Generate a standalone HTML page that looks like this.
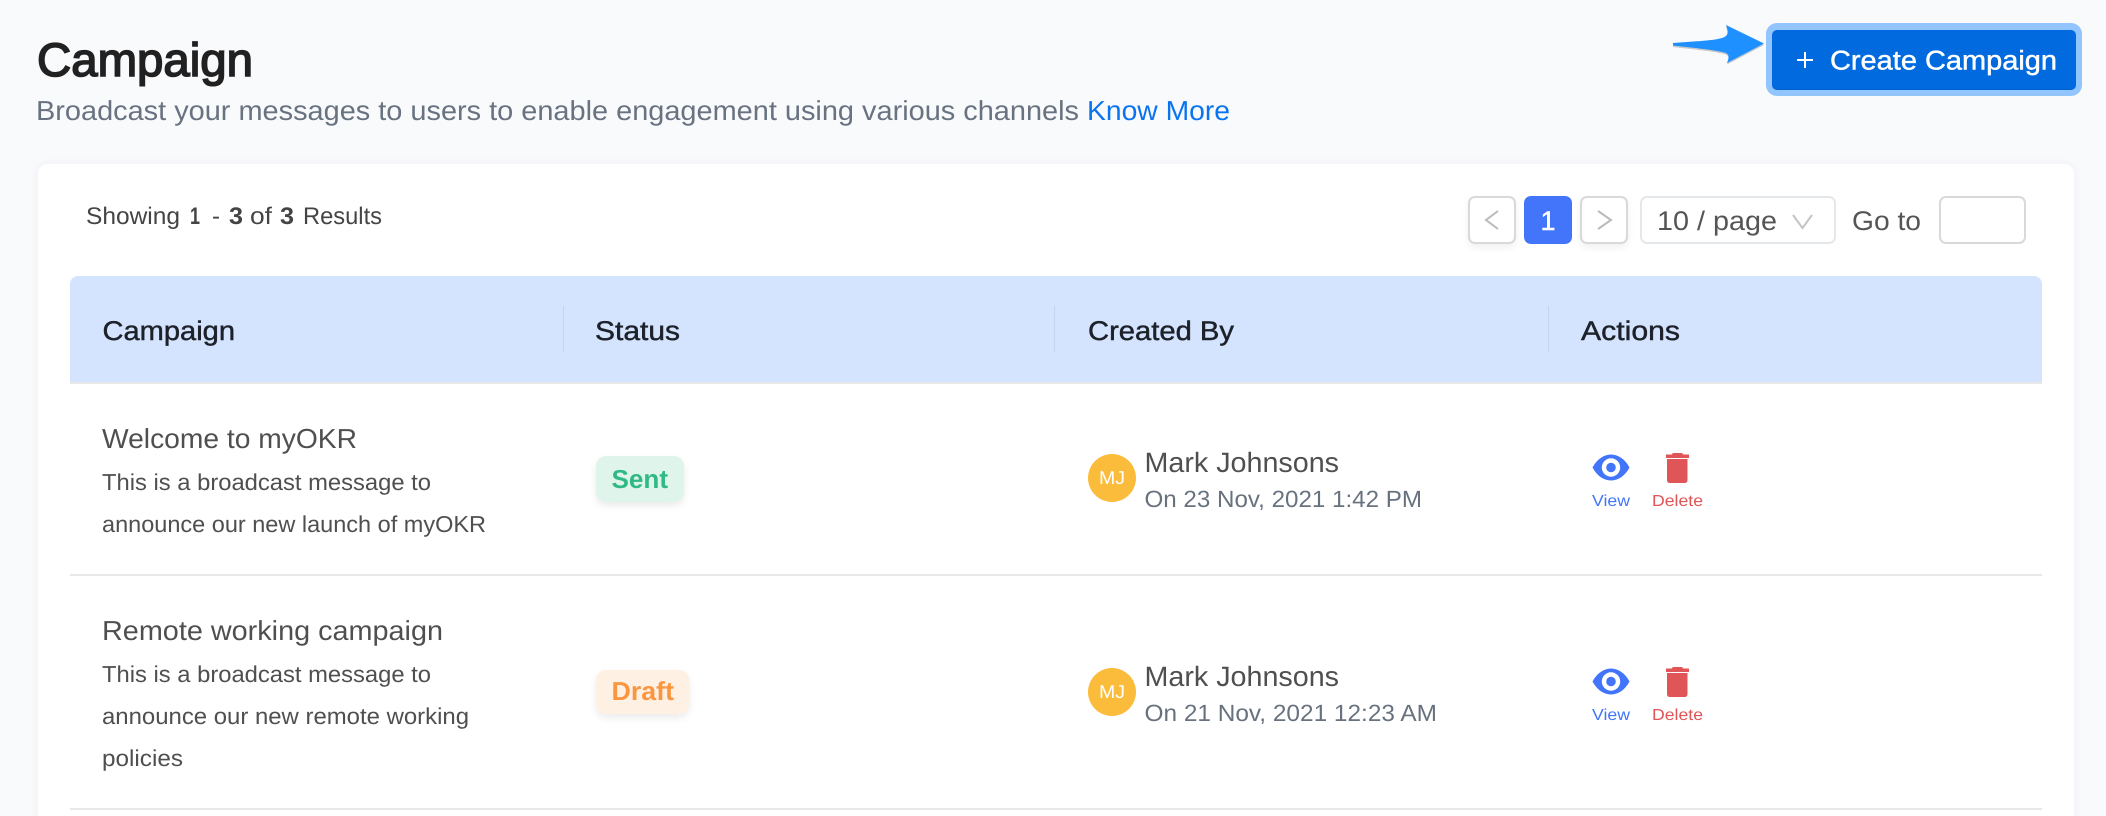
<!DOCTYPE html>
<html lang="en">
<head>
<meta charset="utf-8">
<title>Campaign</title>
<style>
html,body{margin:0;padding:0;width:2106px;height:816px;overflow:hidden;background:#f9fafc}
#w{position:relative;width:2106px;height:816px;overflow:hidden}
.a{position:absolute;box-sizing:border-box}
svg{position:absolute;left:0;top:0}
text{font-family:"Liberation Sans",sans-serif;text-rendering:geometricPrecision}
.m{stroke-width:.45px}
</style>
</head>
<body>
<div id="w">
<div class="a" style="left:38px;top:164px;width:2036px;height:680px;background:#fff;border-radius:10px;box-shadow:0 0 10px rgba(40,50,80,.05)"></div>
<div class="a" style="left:1766px;top:23px;width:316px;height:73px;background:#92c4fd;border-radius:11px"></div>
<div class="a" style="left:1772px;top:30px;width:304px;height:60px;background:#006ade;border-radius:5px;border-bottom:1px solid #0060cc"></div>

<div class="a" style="left:1468px;top:196px;width:48px;height:48px;background:#fff;border:2px solid #d9d9d9;border-radius:7px;box-shadow:0 4px 8px rgba(0,0,0,.06)"></div>
<div class="a" style="left:1524px;top:196px;width:48px;height:48px;background:#4275f9;border-radius:7px"></div>
<div class="a" style="left:1580px;top:196px;width:48px;height:48px;background:#fff;border:2px solid #d9d9d9;border-radius:7px;box-shadow:0 4px 8px rgba(0,0,0,.06)"></div>
<div class="a" style="left:1640px;top:196px;width:196px;height:48px;background:#fff;border:2px solid #e5e8eb;border-radius:7px"></div>
<div class="a" style="left:1939px;top:196px;width:87px;height:48px;background:#fff;border:2px solid #d9d9d9;border-radius:7px"></div>

<div class="a" style="left:70px;top:276px;width:1972px;height:108px;background:#d4e4fe;border-radius:8px 8px 0 0;border-bottom:2px solid #e8e8e8"></div>
<div class="a" style="left:563px;top:306px;width:1px;height:46px;background:#c2d4ee"></div>
<div class="a" style="left:1054px;top:306px;width:1px;height:46px;background:#c2d4ee"></div>
<div class="a" style="left:1548px;top:306px;width:1px;height:46px;background:#c2d4ee"></div>

<div class="a" style="left:70px;top:574px;width:1972px;height:2px;background:#e8e8e8"></div>
<div class="a" style="left:70px;top:808px;width:1972px;height:2px;background:#e8e8e8"></div>

<div class="a" style="left:596px;top:456px;width:88px;height:46px;background:#dff5ec;border-radius:10px;box-shadow:0 4px 8px rgba(0,0,0,.08)"></div>
<div class="a" style="left:596px;top:670px;width:93px;height:44px;background:#fff0e4;border-radius:10px;box-shadow:0 4px 8px rgba(0,0,0,.08)"></div>

<svg width="2106" height="816" viewBox="0 0 2106 816" xmlns="http://www.w3.org/2000/svg">
  <!-- arrow -->
  <path d="M1673 43C1690 41.500 1712 41 1722 38C1728 36 1729 33 1726 25L1764 43.500L1727 63C1730 56 1729 53 1722 52C1712 49.500 1690 47.500 1673 45.500Z" fill="#666" opacity=".35" transform="translate(0 1.500)"/>
  <path d="M1673 43C1690 41.500 1712 41 1722 38C1728 36 1729 33 1726 25L1764 43.500L1727 63C1730 56 1729 53 1722 52C1712 49.500 1690 47.500 1673 45.500Z" fill="#1e90ff"/>

  <!-- header -->
  <text x="37" y="76" font-size="47" fill="#212121" stroke="#212121" stroke-width="1.600" textLength="216" lengthAdjust="spacingAndGlyphs">Campaign</text>
  <text x="36" y="120" font-size="27.500" fill="#687280" textLength="1043" lengthAdjust="spacingAndGlyphs">Broadcast your messages to users to enable engagement using various channels</text>
  <text x="1087" y="120" font-size="27.500" fill="#0a74f0" textLength="143" lengthAdjust="spacingAndGlyphs">Know More</text>

  <!-- create button -->
  <path d="M1805 52V68M1797 60H1813" stroke="#fff" stroke-width="2" fill="none"/>
  <text x="1830" y="69.500" font-size="27" fill="#fff" stroke="#fff" class="m" textLength="227" lengthAdjust="spacingAndGlyphs">Create Campaign</text>

  <!-- showing -->
  <g font-size="24" fill="#444">
    <text x="86" y="224" textLength="94" lengthAdjust="spacingAndGlyphs">Showing</text>
    <text x="190" y="224" font-weight="700" textLength="10" lengthAdjust="spacingAndGlyphs">1</text>
    <text x="212" y="224" textLength="8" lengthAdjust="spacingAndGlyphs">-</text>
    <text x="229" y="224" font-weight="700" textLength="14" lengthAdjust="spacingAndGlyphs">3</text>
    <text x="250" y="224" textLength="22" lengthAdjust="spacingAndGlyphs">of</text>
    <text x="280" y="224" font-weight="700" textLength="14" lengthAdjust="spacingAndGlyphs">3</text>
    <text x="303" y="224" textLength="79" lengthAdjust="spacingAndGlyphs">Results</text>
  </g>

  <!-- pagination -->
  <path d="M1498 211L1486 220L1498 229" stroke="#bbb" stroke-width="2" fill="none"/>
  <path d="M1598 211L1611 220L1598 229" stroke="#bbb" stroke-width="2" fill="none"/>
  <text x="1548" y="230" font-size="27" fill="#fff" text-anchor="middle" stroke="#fff" class="m">1</text>
  <text x="1657" y="230" font-size="27" fill="#555" textLength="120" lengthAdjust="spacingAndGlyphs">10 / page</text>
  <path d="M1793 215L1802.500 228L1812 215" stroke="#c4c4c4" stroke-width="2" fill="none"/>
  <text x="1852" y="230" font-size="27" fill="#555" textLength="69" lengthAdjust="spacingAndGlyphs">Go to</text>

  <!-- table head -->
  <g font-size="27" fill="#1d2129" stroke="#1d2129" class="m">
    <text x="102.500" y="340" textLength="132.500" lengthAdjust="spacingAndGlyphs">Campaign</text>
    <text x="595" y="340" textLength="85" lengthAdjust="spacingAndGlyphs">Status</text>
    <text x="1088" y="340" textLength="146" lengthAdjust="spacingAndGlyphs">Created By</text>
    <text x="1581" y="340" textLength="99" lengthAdjust="spacingAndGlyphs">Actions</text>
  </g>

  <!-- row 1 -->
  <text x="102" y="448" font-size="27.500" fill="#4f4f4f" textLength="255" lengthAdjust="spacingAndGlyphs">Welcome to myOKR</text>
  <text x="102" y="490" font-size="23" fill="#4f4f4f" textLength="329" lengthAdjust="spacingAndGlyphs">This is a broadcast message to</text>
  <text x="102" y="532" font-size="23" fill="#4f4f4f" textLength="384" lengthAdjust="spacingAndGlyphs">announce our new launch of myOKR</text>
  <text x="611.500" y="488" font-size="26" font-weight="700" fill="#2fb985" textLength="56.500" lengthAdjust="spacingAndGlyphs">Sent</text>
  <circle cx="1112" cy="478" r="24" fill="#fbbc3c"/>
  <text x="1099" y="484" font-size="18.500" fill="#fff" textLength="26" lengthAdjust="spacingAndGlyphs">MJ</text>
  <text x="1144.500" y="472" font-size="28" fill="#4f4f4f" textLength="194.500" lengthAdjust="spacingAndGlyphs">Mark Johnsons</text>
  <text x="1144.500" y="507" font-size="23.500" fill="#68727f" textLength="277.500" lengthAdjust="spacingAndGlyphs">On 23 Nov, 2021 1:42 PM</text>

  <path d="M1592.500 467.500C1597 459 1604 454.500 1611 454.500C1618 454.500 1625 459 1629.500 467.500C1625 476 1618 480.500 1611 480.500C1604 480.500 1597 476 1592.500 467.500Z" fill="#4275f9"/>
  <circle cx="1611" cy="467.500" r="9.200" fill="#fff"/>
  <circle cx="1611" cy="467.500" r="4.800" fill="#4275f9"/>
  <path d="M1672 457V454.500Q1672 453 1674 453H1681Q1683 453 1683 454.500V457Z" fill="#e05557"/>
  <rect x="1666" y="454.500" width="23" height="3.500" fill="#e05557"/>
  <path d="M1667 459H1687.500V480Q1687.500 483 1684.500 483H1670Q1667 483 1667 480Z" fill="#e05557"/>
  <text x="1592" y="506" font-size="16" fill="#4275f9" textLength="38" lengthAdjust="spacingAndGlyphs">View</text>
  <text x="1652" y="506" font-size="16" fill="#e05557" textLength="51" lengthAdjust="spacingAndGlyphs">Delete</text>

  <!-- row 2 -->
  <text x="102" y="640" font-size="27.500" fill="#4f4f4f" textLength="341" lengthAdjust="spacingAndGlyphs">Remote working campaign</text>
  <text x="102" y="682" font-size="23" fill="#4f4f4f" textLength="329" lengthAdjust="spacingAndGlyphs">This is a broadcast message to</text>
  <text x="102" y="724" font-size="23" fill="#4f4f4f" textLength="367" lengthAdjust="spacingAndGlyphs">announce our new remote working</text>
  <text x="102" y="766" font-size="23" fill="#4f4f4f" textLength="81" lengthAdjust="spacingAndGlyphs">policies</text>
  <text x="611.500" y="700" font-size="26" font-weight="700" fill="#fb9640" textLength="62.500" lengthAdjust="spacingAndGlyphs">Draft</text>
  <circle cx="1112" cy="692" r="24" fill="#fbbc3c"/>
  <text x="1099" y="698" font-size="18.500" fill="#fff" textLength="26" lengthAdjust="spacingAndGlyphs">MJ</text>
  <text x="1144.500" y="686" font-size="28" fill="#4f4f4f" textLength="194.500" lengthAdjust="spacingAndGlyphs">Mark Johnsons</text>
  <text x="1144.500" y="721" font-size="23.500" fill="#68727f" textLength="292.500" lengthAdjust="spacingAndGlyphs">On 21 Nov, 2021 12:23 AM</text>

  <g transform="translate(0 214)">
    <path d="M1592.500 467.500C1597 459 1604 454.500 1611 454.500C1618 454.500 1625 459 1629.500 467.500C1625 476 1618 480.500 1611 480.500C1604 480.500 1597 476 1592.500 467.500Z" fill="#4275f9"/>
    <circle cx="1611" cy="467.500" r="9.200" fill="#fff"/>
    <circle cx="1611" cy="467.500" r="4.800" fill="#4275f9"/>
    <path d="M1672 457V454.500Q1672 453 1674 453H1681Q1683 453 1683 454.500V457Z" fill="#e05557"/>
    <rect x="1666" y="454.500" width="23" height="3.500" fill="#e05557"/>
    <path d="M1667 459H1687.500V480Q1687.500 483 1684.500 483H1670Q1667 483 1667 480Z" fill="#e05557"/>
    <text x="1592" y="506" font-size="16" fill="#4275f9" textLength="38" lengthAdjust="spacingAndGlyphs">View</text>
    <text x="1652" y="506" font-size="16" fill="#e05557" textLength="51" lengthAdjust="spacingAndGlyphs">Delete</text>
  </g>
</svg>
</div>
</body>
</html>
